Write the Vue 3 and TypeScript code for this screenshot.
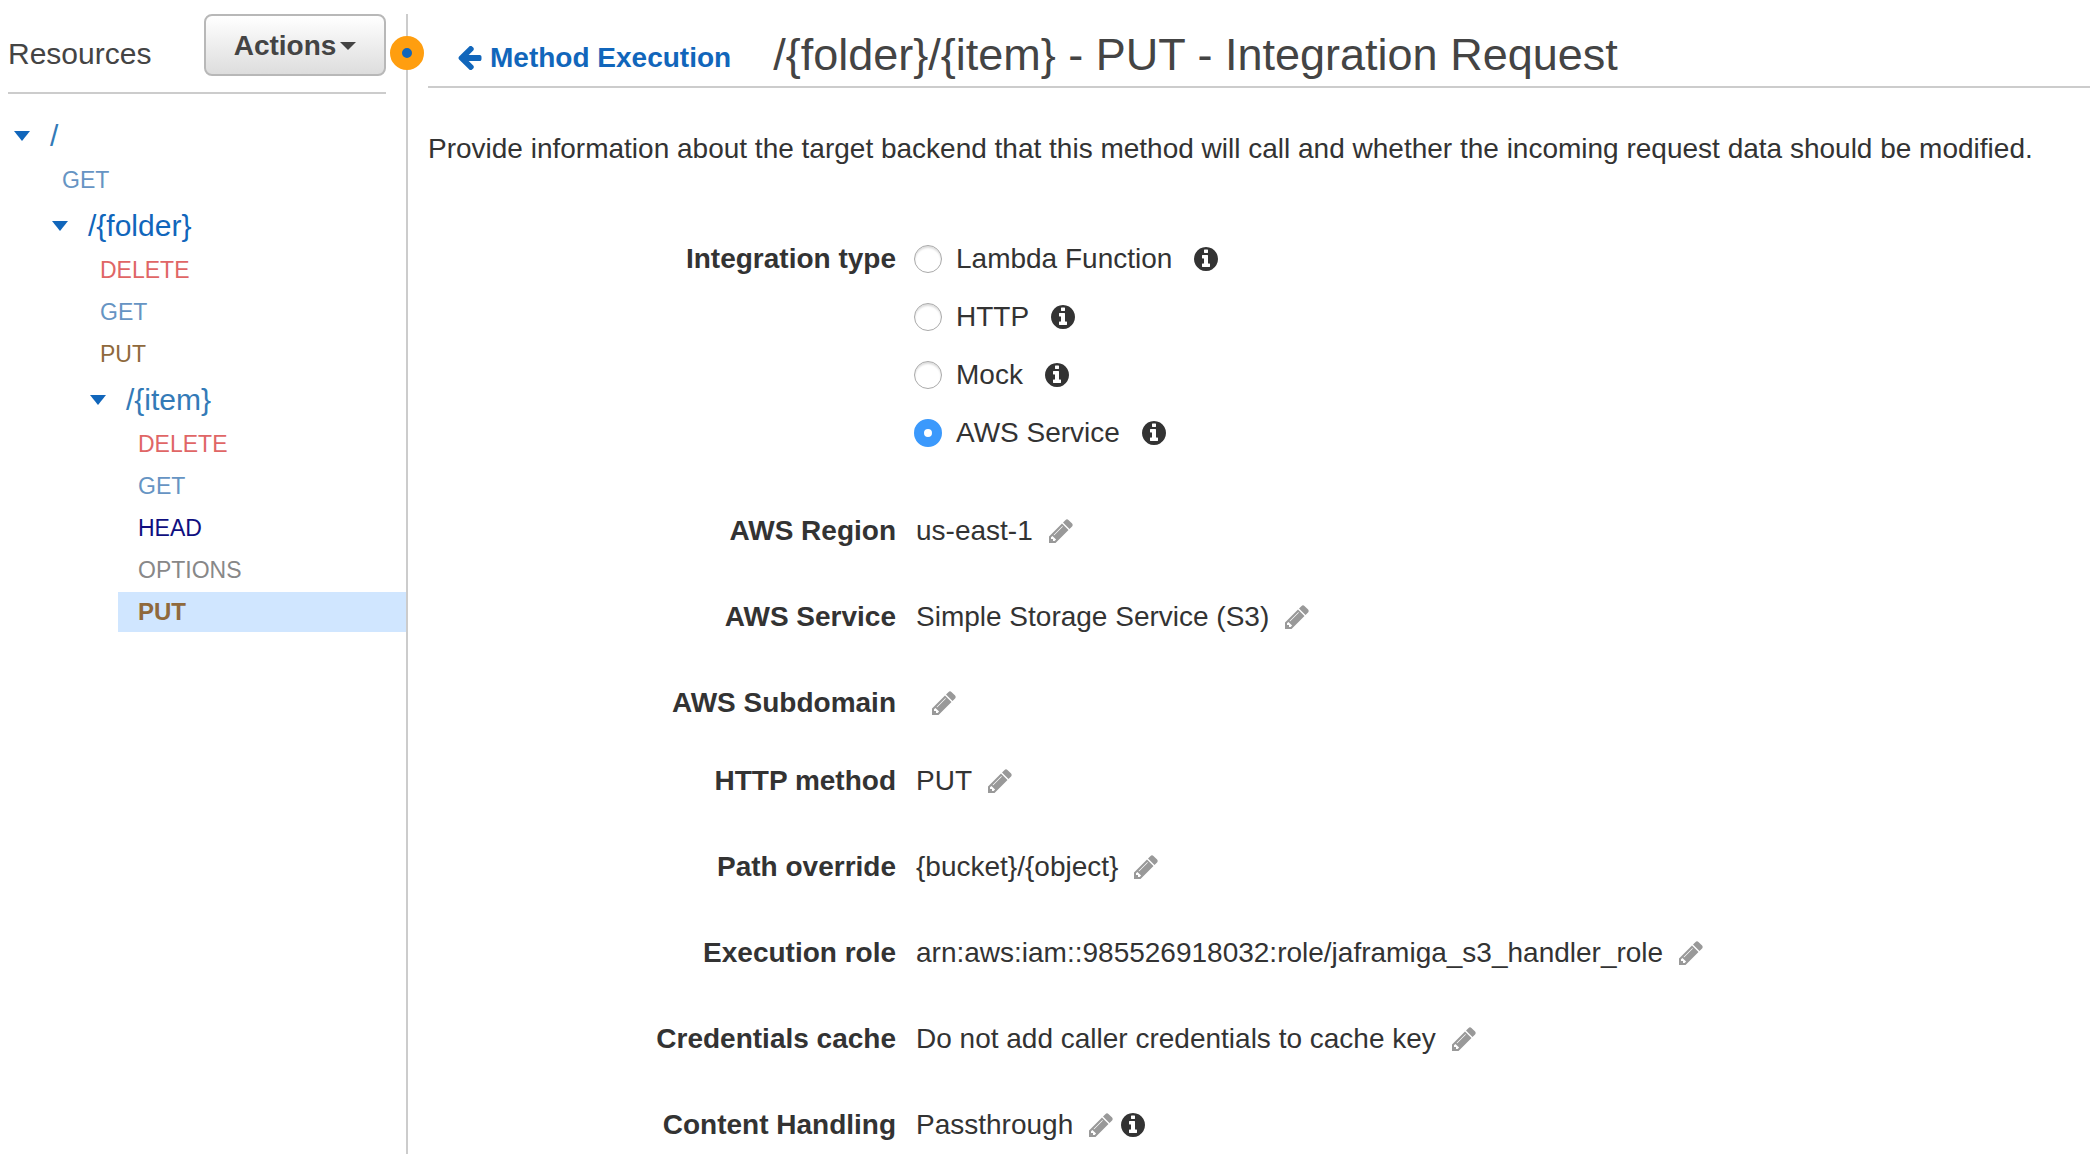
<script setup lang="ts">
import { ref } from 'vue'

interface Node {
  label: string
  kind: string
  level: number
  active?: boolean
}

interface Field {
  label: string
  value: string
  info?: boolean
}

const tree: Node[] = [
  { label: '/', kind: 'path', level: 0 },
  { label: 'GET', kind: 'get', level: 0 },
  { label: '/{folder}', kind: 'path current', level: 1 },
  { label: 'DELETE', kind: 'delete', level: 1 },
  { label: 'GET', kind: 'get', level: 1 },
  { label: 'PUT', kind: 'put', level: 1 },
  { label: '/{item}', kind: 'path', level: 2 },
  { label: 'DELETE', kind: 'delete', level: 2 },
  { label: 'GET', kind: 'get', level: 2 },
  { label: 'HEAD', kind: 'head', level: 2 },
  { label: 'OPTIONS', kind: 'options', level: 2 },
  { label: 'PUT', kind: 'put', level: 2, active: true },
]

const types = ['Lambda Function', 'HTTP', 'Mock', 'AWS Service']
const selected = ref('AWS Service')

const fields: Field[] = [
  { label: 'AWS Region', value: 'us-east-1' },
  { label: 'AWS Service', value: 'Simple Storage Service (S3)' },
  { label: 'AWS Subdomain', value: '' },
  { label: 'HTTP method', value: 'PUT' },
  { label: 'Path override', value: '{bucket}/{object}' },
  { label: 'Execution role', value: 'arn:aws:iam::985526918032:role/jaframiga_s3_handler_role' },
  { label: 'Credentials cache', value: 'Do not add caller credentials to cache key' },
  { label: 'Content Handling', value: 'Passthrough', info: true },
]

const infoIcon =
  'M1024 1376v-160q0-14-9-23t-23-9h-96V672q0-14-9-23t-23-9H544q-14 0-23 9t-9 23v160q0 14 9 23t23 9h96v320h-96q-14 0-23 9t-9 23v160q0 14 9 23t23 9h448q14 0 23-9t9-23zM896 480V320q0-14-9-23t-23-9H672q-14 0-23 9t-9 23v160q0 14 9 23t23 9h192q14 0 23-9t9-23zM1536 896q0 209-103 385.5T1153.5 1561 768 1664t-385.5-103T103 1281.5 0 896t103-385.5T382.5 231 768 128t385.5 103T1433 510.500 1536 896z'
const pencilIcon =
  'M363 1408l91-91-235-235-91 91v107h128v128h107zM886 480q0-22-22-22-10 0-17 7l-542 542q-7 7-7 17 0 22 22 22 10 0 17-7l542-542q7-7 7-17zM832 288l416 416-832 832H0v-416zM1515 384q0 53-37 90l-166 166-416-416 166-165q36-38 90-38 53 0 91 38l235 234q37 39 37 91z'
const arrowIcon =
  'M1536 896v128q0 53-32.5 90.500T1419 1152H715l293 294q38 36 38 90t-38 90l-75 76q-37 37-90 37-52 0-91-37L101 1050q-37-37-37-90 0-52 37-91l651-650q38-38 91-38 52 0 90 38l75 74q38 38 38 91t-38 91L715 768h704q52 0 84.500 37.500T1536 896z'
</script>

<template>
  <div class="page">
    <aside class="sidebar">
      <header class="side-head">
        <h2>Resources</h2>
        <button type="button" class="actions">Actions<span class="caret"></span></button>
      </header>
      <nav aria-label="Resources">
        <a
          v-for="(n, i) in tree"
          :key="i"
          href="#"
          class="node"
          :class="[n.kind, 'level-' + n.level, { active: n.active }]"
        ><span v-if="n.kind.startsWith('path')" class="toggle"></span>{{ n.label }}</a>
      </nav>
      <span class="handle"></span>
    </aside>

    <main class="content">
      <header class="main-head">
        <a href="#" class="back">
          <svg viewBox="32 192 1536 1536" aria-hidden="true">
            <path :d="arrowIcon" fill="currentColor" />
          </svg>Method Execution</a>
        <h1>/{folder}/{item} - PUT - Integration Request</h1>
      </header>
      <p class="intro">
        Provide information about the target backend that this method will call and whether the incoming request data should be modified.
      </p>

      <form @submit.prevent>
        <div class="types" role="radiogroup" aria-labelledby="type-label">
          <span id="type-label" class="label">Integration type</span>
          <div>
            <div v-for="(t, i) in types" :key="t" class="option">
              <input :id="'type-' + i" v-model="selected" type="radio" name="type" :value="t" />
              <label :for="'type-' + i">{{ t }}</label>
              <svg class="info" viewBox="0 128 1536 1536" aria-hidden="true">
                <path :d="infoIcon" />
              </svg>
            </div>
          </div>
        </div>

        <dl class="fields">
          <div v-for="f in fields" :key="f.label" class="field" :class="{ blank: !f.value }">
            <dt class="label">{{ f.label }}</dt>
            <dd>
              <span>{{ f.value }}</span>
              <button type="button" class="edit" :aria-label="'Edit ' + f.label">
                <svg viewBox="0 0 1536 1536" aria-hidden="true">
                  <path :d="pencilIcon" />
                </svg>
              </button>
              <svg v-if="f.info" class="info" viewBox="0 128 1536 1536" aria-hidden="true">
                <path :d="infoIcon" />
              </svg>
            </dd>
          </div>
        </dl>
      </form>
    </main>
  </div>
</template>

<style>
body {
  margin: 0;
  background: #fff;
}
</style>

<style scoped>
.page {
  display: flex;
  min-height: calc(100vh - 14px);
  padding-top: 14px;
  font-family: "Liberation Sans", Arial, sans-serif;
  font-size: 28px;
  line-height: 40px;
  color: #333;
}
a {
  text-decoration: none;
}
h1,
h2,
p,
dl,
dd {
  margin: 0;
  font-weight: normal;
}
.sidebar {
  position: relative;
  box-sizing: border-box;
  flex: 0 0 408px;
  border-right: 2px solid #ccc;
}
.side-head {
  display: flex;
  justify-content: space-between;
  height: 78px;
  margin: 0 20px 0 8px;
  border-bottom: 2px solid #ccc;
}
h2 {
  margin-top: 20px;
  font-size: 30px;
  color: #444;
}
.actions {
  display: flex;
  align-items: center;
  justify-content: center;
  gap: 4px;
  box-sizing: border-box;
  width: 182px;
  height: 62px;
  padding: 2px 0 0;
  border: 2px solid #b8b8b8;
  border-radius: 8px;
  background: linear-gradient(#fff, #ddd);
  font: bold 28px/40px "Liberation Sans", Arial, sans-serif;
  color: #444;
}
.caret {
  border: 8px solid transparent;
  border-top-color: #444;
  border-bottom: 0;
}
nav {
  padding-top: 18px;
}
.node {
  display: flex;
  align-items: center;
  height: 40px;
  margin-bottom: 2px;
  padding-left: 20px;
  font-size: 23px;
}
.path {
  height: 48px;
  margin-bottom: 0;
  padding-left: 0;
  font-size: 30px;
  color: #337ab7;
}
.current {
  color: #1166bb;
}
.toggle {
  margin-right: 20px;
  border: 8px solid transparent;
  border-top: 10px solid #1166bb;
  border-bottom: 0;
}
.level-0 { margin-left: 42px; }
.level-1 { margin-left: 80px; }
.level-2 { margin-left: 118px; }
.path.level-0 { margin-left: 14px; }
.path.level-1 { margin-left: 52px; }
.path.level-2 { margin-left: 90px; }
.get { color: #6694c3; }
.delete { color: #e06666; }
.put { color: #8f693c; }
.head { color: #0f0f80; }
.options { color: #888; }
.active {
  background: #d0e6ff;
  font-size: 24px;
  font-weight: bold;
}
.handle {
  position: absolute;
  top: 22px;
  right: -18px;
  box-sizing: border-box;
  width: 34px;
  height: 34px;
  border: 12px solid #ff9e0f;
  border-radius: 50%;
  background: #1166bb;
}
.content {
  flex: 1;
  min-width: 0;
  padding-left: 20px;
}
.main-head {
  display: flex;
  gap: 42px;
  height: 72px;
  padding-left: 30px;
  border-bottom: 2px solid #ccc;
}
.back {
  margin-top: 24px;
  font-weight: bold;
  color: #1166bb;
}
.back svg {
  width: 24px;
  height: 24px;
  margin-right: 8px;
  vertical-align: -3px;
}
h1 {
  margin-top: 12px;
  font-size: 45px;
  line-height: 58px;
  color: #444;
}
.intro {
  margin-top: 41px;
  white-space: nowrap;
}
.types {
  display: flex;
  margin-top: 70px;
}
.label {
  flex: 0 0 468px;
  margin-right: 20px;
  text-align: right;
  font-weight: bold;
}
.option {
  display: flex;
  align-items: center;
  height: 40px;
  margin-bottom: 18px;
}
input {
  appearance: none;
  box-sizing: border-box;
  width: 28px;
  height: 28px;
  margin: 0 14px 0 -2px;
  border: 1px solid #aaa;
  border-radius: 50%;
  background: #fff;
  box-shadow: inset 0 2px 2px #ddd;
}
input:checked {
  border: 10px solid #3b99fc;
  box-shadow: none;
}
.info {
  width: 24px;
  height: 24px;
  margin-left: 22px;
  fill: #333;
}
.fields {
  padding-top: 40px;
}
.field {
  display: flex;
  margin-bottom: 46px;
}
.blank {
  margin-bottom: 38px;
}
.field:last-child {
  margin-bottom: 0;
}
dd {
  display: flex;
  align-items: center;
}
.edit {
  display: flex;
  margin-left: 16px;
  padding: 0;
  border: 0;
  background: none;
}
.edit svg {
  width: 24px;
  height: 24px;
  fill: #999;
}
.edit + .info {
  margin-left: 8px;
}
</style>
